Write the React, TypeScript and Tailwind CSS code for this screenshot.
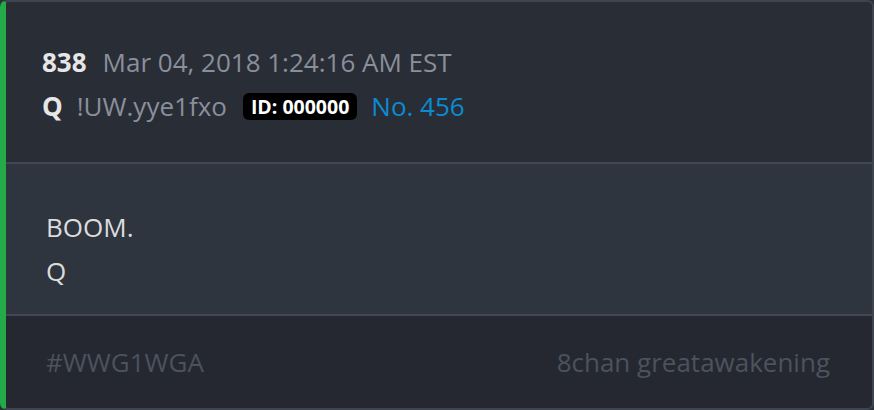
import React from "react";

function App() {
  return (
    <div className="w-[874px] h-[410px] bg-[#2b2f37] font-['Open_Sans',sans-serif]">
      <div className="h-full flex flex-col overflow-hidden rounded-[7px] border-2 border-l-[6px] border-[#3e4450] border-l-[#22ab47]">
        <div className="h-[160px] bg-[#292d36] pl-[36px] pt-[42px]">
          <div className="flex items-baseline gap-[16px] text-[26px] leading-[36px]">
            <span className="font-bold text-[#e6e6e6]">838</span>
            <span className="text-[#8a8f9c]">Mar 04, 2018 1:24:16 AM EST</span>
          </div>
          <div className="flex items-center text-[26px] leading-[36px] mt-[8px]">
            <span className="font-bold text-[#e6e6e6] mr-[14px]">Q</span>
            <span className="text-[#8a8f9c] mr-[16px]">!UW.yye1fxo</span>
            <span className="bg-black text-white font-bold text-[19.5px] leading-[27px] px-[8px] rounded-[6px] mr-[14px]">
              ID: 000000
            </span>
            <span className="text-[#0b8bd1]">No. 456</span>
          </div>
        </div>
        <div className="h-[152px] bg-[#2f353f] border-t-2 border-[#414753] pl-[40px] pt-[41px] text-[26px] leading-[44px] text-[#dcdcdc]">
          <p>BOOM.</p>
          <p>Q</p>
        </div>
        <div className="flex-1 bg-[#252830] border-t-2 border-[#414753] flex items-center justify-between pl-[40px] pr-[42px] text-[26px] text-[#4c525e]">
          <span>#WWG1WGA</span>
          <span>8chan greatawakening</span>
        </div>
      </div>
    </div>
  );
}

export default App;
